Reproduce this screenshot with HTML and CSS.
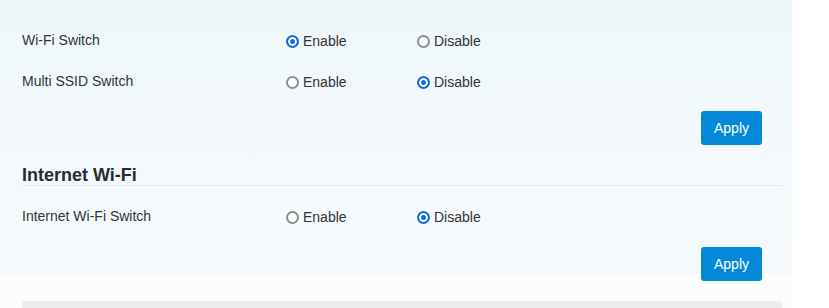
FILE: index.html
```html
<!DOCTYPE html>
<html>
<head>
<meta charset="utf-8">
<link rel="stylesheet" href="styles.css">
</head>
<body>
<div class="panel">
  <div class="row">
    <div class="label">Wi-Fi Switch</div>
    <label class="opt"><input type="radio" name="wifi" checked>Enable</label>
    <label class="opt"><input type="radio" name="wifi">Disable</label>
  </div>
  <div class="row">
    <div class="label">Multi SSID Switch</div>
    <label class="opt"><input type="radio" name="ssid">Enable</label>
    <label class="opt"><input type="radio" name="ssid" checked>Disable</label>
  </div>
  <div class="actions first"><button class="apply">Apply</button></div>

  <h2 class="section-title">Internet Wi-Fi</h2>
  <div class="row row-sec">
    <div class="label">Internet Wi-Fi Switch</div>
    <label class="opt"><input type="radio" name="iwifi">Enable</label>
    <label class="opt"><input type="radio" name="iwifi" checked>Disable</label>
  </div>
  <div class="actions second"><button class="apply">Apply</button></div>

  <div class="footer-box"></div>
</div>
</body>
</html>
```

FILE: styles.css
```css
html, body {
  margin: 0;
  padding: 0;
  background: #ffffff;
}
body {
  font-family: "Liberation Sans", Arial, sans-serif;
  font-size: 14px;
  color: #333333;
}
.panel {
  width: 792px;
  box-sizing: border-box;
  padding: 20px 10px 20px 22px;
  background: linear-gradient(to bottom, #eff7fb 0px, #f6fafd 274px, #fafcfe 274px, #fafcfe 100%);
}
.row {
  display: grid;
  grid-template-columns: 259px 131px 1fr;
  align-items: center;
  height: 41px;
}
.label {
  line-height: 41px;
}
.opt {
  display: flex;
  align-items: center;
  height: 41px;
  line-height: 40px;
  cursor: pointer;
}
.opt input {
  -webkit-appearance: none;
  appearance: none;
  box-sizing: border-box;
  width: 13px;
  height: 13px;
  margin: 1px 4px 0 5px;
  border: 2px solid #8c8c94;
  border-radius: 50%;
  background: #ffffff;
}
.opt input:checked {
  border-color: #1469e0;
  background: #1469e0;
  box-shadow: inset 0 0 0 2px #ffffff;
}
.actions {
  display: flex;
  justify-content: flex-end;
  padding-right: 20px;
}
.actions.first {
  margin-top: 9px;
}
.actions.second {
  margin-top: 10px;
}
.apply {
  width: 61px;
  height: 34px;
  border: none;
  border-radius: 3px;
  background: #0389d7;
  color: #ffffff;
  font-family: "Liberation Sans", Arial, sans-serif;
  font-size: 14px;
  padding: 0;
}
.section-title {
  margin: 17px 0 0 0;
  padding-top: 4px;
  font-size: 18px;
  font-weight: bold;
  line-height: 19px;
  color: #2b2b2b;
  border-bottom: 1px solid #e2e7ea;
}
.row-sec {
  margin-top: 10px;
}
.footer-box {
  margin-top: 20px;
  height: 30px;
  background: #ececec;
  border-radius: 4px;
}
```
